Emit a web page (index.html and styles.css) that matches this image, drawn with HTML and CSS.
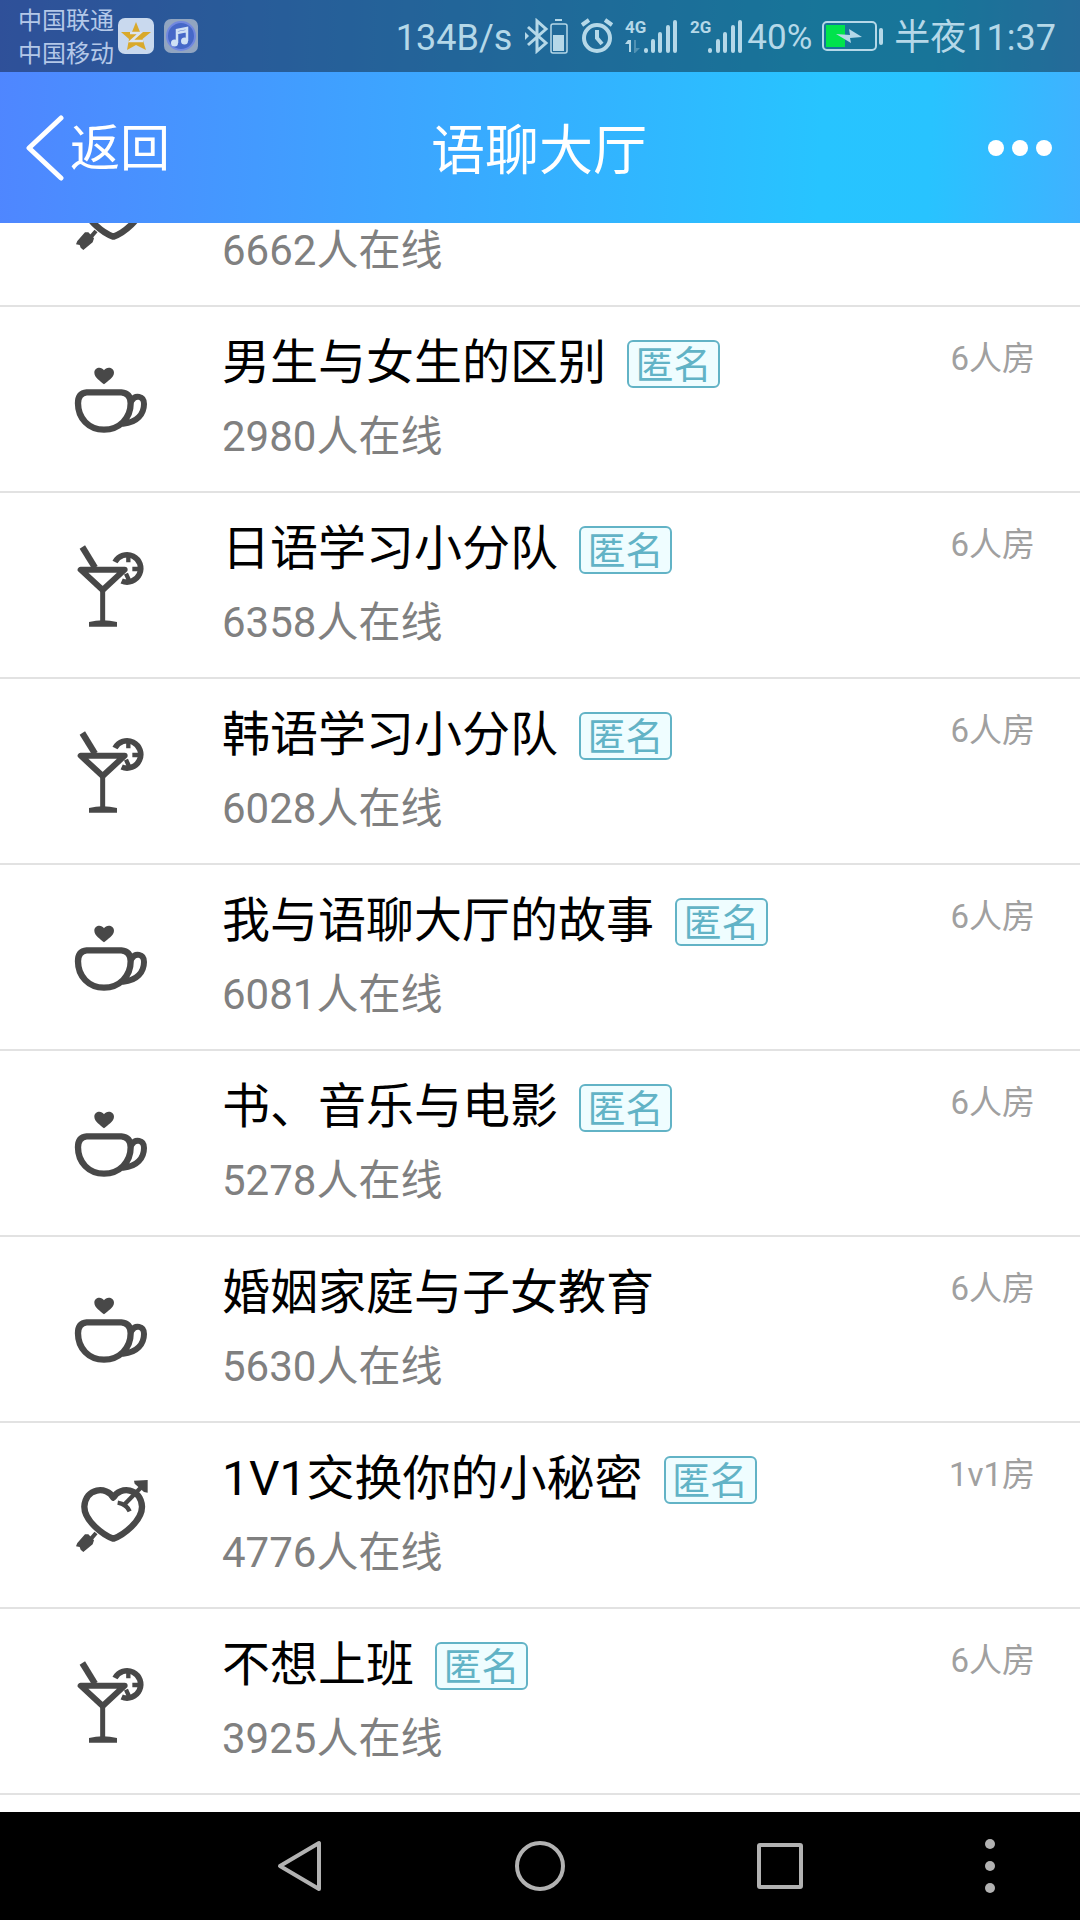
FILE: index.html
```html
<!DOCTYPE html>
<html lang="zh-CN">
<head>
<meta charset="utf-8">
<meta name="viewport" content="width=device-width, initial-scale=1">
<title>语聊大厅</title>
<link rel="stylesheet" href="styles.css">
</head>
<body>
<svg class="defs" aria-hidden="true">
  <symbol id="cup" viewBox="0 0 270 270">
    <path fill="none" stroke="currentColor" stroke-width="19" stroke-linejoin="round" d="M62 112H166Q194 114 194 145C194 190 160 224 114 224C68 224 36 190 36 145Q36 114 62 112Z"/>
    <path fill="none" stroke="currentColor" stroke-width="18" stroke-linecap="round" d="M198 136C207 120 234 121 234 147C234 177 213 203 172 206"/>
    <path fill="currentColor" d="M114 88C104 78 85 68 85 53C85 36 107 33 114 46C121 33 144 36 144 53C144 68 124 78 114 88Z"/>
  </symbol>
  <symbol id="cocktail" viewBox="0 0 270 270">
    <g fill="none" stroke="currentColor">
      <path stroke-width="19" d="M49 18L87 80"/>
      <path stroke-width="18" stroke-linejoin="round" d="M44 86H176L110 147Z"/>
      <path stroke-width="15" d="M110 145V245"/>
      <path stroke-width="17" d="M147 63A41 41 0 1 1 167 120"/>
      <path stroke-width="13" d="M187 40V64M199 84H226M180 98L191 122"/>
    </g>
    <path fill="currentColor" d="M69 243Q110 233 153 243V257H69Z"/>
  </symbol>
  <symbol id="heart" viewBox="0 0 270 270">
    <path fill="none" stroke="currentColor" stroke-width="19" stroke-linejoin="round" d="M142 80C122 44 58 50 55 107C55 150 112 192 142 203C172 192 228 150 228 107C225 50 162 44 142 80Z"/>
    <path fill="none" stroke="#fff" stroke-width="20" d="M174 102L196 80M152 84L158 92"/>
    <g fill="none" stroke="currentColor">
      <path stroke-width="13" d="M170 106L230 44"/>
      <path stroke-width="13" d="M155 95Q181 99 191 121"/>
      <path stroke-width="12" d="M76 202L90 186"/>
    </g>
    <path fill="currentColor" d="M204 29L245 27V65L234 63L206 38ZM67 190L84 208L80 220L52 243L44 236L41 228L30 226L34 216L57 190Z"/>
  </symbol>
</svg>
<div class="phone">
  <header class="top">
    <div class="status">
      <div class="carriers"><span>中国联通</span><span>中国移动</span></div>
      <svg class="app-icon" width="36" height="36" viewBox="0 0 36 36">
        <rect width="36" height="36" rx="7" fill="#c9d9ee"/>
        <path fill="#d9a92b" d="M18 4L22 14L33 14L24.500 21L28 32L18 27L9 32L11 21L3 14L14 14Z"/>
        <path fill="none" stroke="#dce4ee" stroke-width="2.500" d="M12 15H22L13 23H25"/>
      </svg>
      <svg class="app-icon" width="34" height="34" viewBox="0 0 34 34">
        <rect width="34" height="34" rx="7" fill="#91a5c1"/>
        <circle cx="17" cy="17" r="14" fill="#4668c8" stroke="#7188df" stroke-width="2"/>
        <path fill="none" stroke="#cfe0f5" stroke-width="2.500" d="M13 24V11L23 9V22M13 14L23 12"/>
        <circle cx="10.500" cy="24" r="3.500" fill="#cfe0f5"/><circle cx="20.500" cy="22" r="3.500" fill="#cfe0f5"/>
      </svg>
      <span class="speed">134B/s</span>
      <svg width="45" height="36" viewBox="0 0 45 36" fill="none" stroke="currentColor">
        <path stroke-width="3" d="M4 9L22 25L13 33V3L22 11L4 27"/>
        <path fill="currentColor" stroke="none" d="M1 14L5 18L1 22ZM31 1H38V3H31ZM29 17H40V33H29Z"/>
        <rect x="27" y="6" width="16" height="29" rx="2" stroke-width="1.500"/>
      </svg>
      <svg width="34" height="36" viewBox="0 0 34 36" fill="none" stroke="currentColor" stroke-width="4">
        <circle cx="17" cy="20" r="13"/>
        <path d="M17 12V20L22 26M2 7L9 2M25 2L32 7"/>
      </svg>
      <svg class="signal" width="54" height="36" viewBox="0 0 54 36">
        <text x="0" y="15">4G</text>
        <path fill="currentColor" d="M3 22H6V34H4V26H0Z"/>
        <path fill="currentColor" opacity=".35" d="M9 22H11V30H15L10 35H9Z"/>
        <path class="bars" d="M21 32V33M28 23V33M35 16V33M43 9V33M50 4V33"/>
      </svg>
      <svg class="signal" width="54" height="36" viewBox="0 0 54 36">
        <text x="0" y="15">2G</text>
        <path class="bars" d="M20 32V33M28 23V33M35 16V33M43 9V33M50 4V33"/>
      </svg>
      <span class="percent">40%</span>
      <svg class="battery" width="62" height="30" viewBox="0 0 62 30">
        <rect x="1" y="1" width="53" height="28" rx="4" fill="none" stroke="currentColor" stroke-width="2"/>
        <rect x="4" y="4" width="19" height="22" fill="#00e34c"/>
        <path fill="currentColor" d="M14 13L28 14L27 8L40 16L28 17L29 22Z"/>
        <rect x="57" y="7" width="4" height="17" rx="2" fill="currentColor"/>
      </svg>
      <time class="clock">半夜11:37</time>
    </div>
    <div class="titlebar">
      <button class="back" type="button">
        <svg width="38" height="66" viewBox="0 0 38 66"><path fill="none" stroke="currentColor" stroke-width="5" stroke-linecap="round" stroke-linejoin="round" d="M35 3L3 33L35 63"/></svg>
        <span>返回</span>
      </button>
      <h1>语聊大厅</h1>
      <button class="more" type="button" aria-label="更多">
        <svg width="64" height="16" viewBox="0 0 64 16" fill="currentColor"><circle cx="8" cy="8" r="8"/><circle cx="32" cy="8" r="8"/><circle cx="56" cy="8" r="8"/></svg>
      </button>
    </div>
  </header>
  <main class="viewport">
    <ul class="rooms">
      <li class="room"><svg class="icon"><use href="#heart"/></svg><div class="info"><p>6662人在线</p></div></li>
      <li class="room"><svg class="icon"><use href="#cup"/></svg><div class="info"><h2>男生与女生的区别<span class="tag">匿名</span></h2><p>2980人在线</p></div><span class="size">6人房</span></li>
      <li class="room"><svg class="icon"><use href="#cocktail"/></svg><div class="info"><h2>日语学习小分队<span class="tag">匿名</span></h2><p>6358人在线</p></div><span class="size">6人房</span></li>
      <li class="room"><svg class="icon"><use href="#cocktail"/></svg><div class="info"><h2>韩语学习小分队<span class="tag">匿名</span></h2><p>6028人在线</p></div><span class="size">6人房</span></li>
      <li class="room"><svg class="icon"><use href="#cup"/></svg><div class="info"><h2>我与语聊大厅的故事<span class="tag">匿名</span></h2><p>6081人在线</p></div><span class="size">6人房</span></li>
      <li class="room"><svg class="icon"><use href="#cup"/></svg><div class="info"><h2>书、音乐与电影<span class="tag">匿名</span></h2><p>5278人在线</p></div><span class="size">6人房</span></li>
      <li class="room"><svg class="icon"><use href="#cup"/></svg><div class="info"><h2>婚姻家庭与子女教育</h2><p>5630人在线</p></div><span class="size">6人房</span></li>
      <li class="room"><svg class="icon"><use href="#heart"/></svg><div class="info"><h2>1V1交换你的小秘密<span class="tag">匿名</span></h2><p>4776人在线</p></div><span class="size">1v1房</span></li>
      <li class="room"><svg class="icon"><use href="#cocktail"/></svg><div class="info"><h2>不想上班<span class="tag">匿名</span></h2><p>3925人在线</p></div><span class="size">6人房</span></li>
    </ul>
  </main>
  <nav class="navbar">
    <button class="nav-back" type="button" aria-label="后退"><svg width="50" height="54" viewBox="0 0 50 54"><path d="M44 4V50L5 27Z"/></svg></button>
    <button type="button" aria-label="主页"><svg width="50" height="54" viewBox="0 0 50 54"><circle cx="25" cy="27" r="23"/></svg></button>
    <button type="button" aria-label="最近任务"><svg width="50" height="54" viewBox="0 0 50 54"><rect x="4" y="6" width="42" height="42" rx="1"/></svg></button>
    <button type="button" aria-label="菜单"><svg width="50" height="54" viewBox="0 0 50 54"><g class="dots"><circle cx="25" cy="5" r="5"/><circle cx="25" cy="27" r="5"/><circle cx="25" cy="49" r="5"/></g></svg></button>
  </nav>
</div>
</body>
</html>
```
FILE: styles.css
```css
* {
  box-sizing: border-box;
  margin: 0;
  padding: 0;
}

body {
  font-family: Roboto, "Noto Sans CJK SC", sans-serif;
  background: #fff;
  color: #000;
}

button {
  border: 0;
  background: none;
  color: inherit;
  font: inherit;
}

svg {
  display: block;
  flex: none;
}

.defs {
  display: none;
}

.phone {
  display: flex;
  flex-direction: column;
  height: 100vh;
}

.top {
  background: linear-gradient(92deg, #4f86ff 0%, #3da4ff 36%, #27c4ff 76%, #28c3ff 86%, #3fb2ff 100%);
  color: #fff;
}

/* status bar */
.status {
  display: flex;
  align-items: center;
  height: 72px;
  padding: 0 24px 0 18px;
  background: rgba(0, 0, 0, 0.4);
  color: #b5d8e8;
  font-size: 36px;
  line-height: 42px;
  white-space: nowrap;
}

.status > span,
.clock,
.carriers {
  padding-top: 4px;
}

.carriers {
  display: flex;
  flex-direction: column;
  margin-right: 4px;
  font-size: 24px;
  line-height: 33px;
  color: #b4c8e8;
}

.app-icon {
  margin-right: 10px;
}

.speed {
  margin-left: auto;
  margin-right: 12px;
}

.status svg + svg:not(.app-icon) {
  margin-left: 11px;
}

.signal text {
  font-size: 17px;
  font-weight: 700;
  fill: currentColor;
}

.bars {
  fill: none;
  stroke: currentColor;
  stroke-width: 4;
  stroke-linecap: round;
}

.percent {
  margin: 0 10px 0 3px;
  font-size: 35px;
}

.clock {
  margin-left: 10px;
}

/* title bar */
.titlebar {
  display: grid;
  grid-template-columns: 1fr auto 1fr;
  align-items: center;
  height: 151px;
  padding: 0 28px 0 26px;
}

.back {
  display: flex;
  align-items: center;
  gap: 6px;
  font-size: 50px;
  line-height: 60px;
}

.back span {
  padding-top: 3px;
}

h1 {
  padding-top: 8px;
  font-size: 54px;
  line-height: 64px;
  font-weight: 400;
}

.more {
  justify-self: end;
}

/* room list, scrolled part way through its first row */
.viewport {
  flex: 1;
  min-height: 0;
  overflow: hidden;
}

.rooms {
  margin-top: -102px;
  list-style: none;
}

.room {
  display: flex;
  height: 186px;
  padding: 0 45px 0 66px;
  border-bottom: 2px solid #e2e2e2;
}

.icon {
  align-self: center;
  width: 90px;
  height: 90px;
  margin: 2px 66px 0 0;
  color: #484848;
}

.info {
  display: flex;
  flex: 1;
  flex-direction: column;
  justify-content: flex-end;
  gap: 16px;
  padding-bottom: 26px;
}

h2 {
  display: flex;
  align-items: center;
  gap: 21px;
  font-size: 48px;
  line-height: 60px;
  font-weight: 400;
}

.info p {
  font-size: 42px;
  line-height: 56px;
  color: #808080;
}

.tag {
  width: 93px;
  height: 48px;
  margin-top: 2px;
  border: 2px solid #62b3c6;
  border-radius: 6px;
  background: #effdff;
  color: #62b3c6;
  font-size: 38px;
  line-height: 46px;
  text-align: center;
}

.size {
  padding-top: 30px;
  font-size: 33px;
  line-height: 44px;
  color: #a0a0a0;
}

/* system navigation */
.navbar {
  display: grid;
  grid-template-columns: 3fr 4fr 4fr 4fr 3fr;
  height: 108px;
  background: #000;
}

.navbar button {
  display: flex;
  align-items: center;
  justify-content: center;
}

.nav-back {
  grid-column: 2;
}

.navbar svg {
  fill: none;
  stroke: #b2b2b2;
  stroke-width: 4;
  stroke-linejoin: round;
}

.navbar .dots {
  fill: #b2b2b2;
  stroke: none;
}
```
